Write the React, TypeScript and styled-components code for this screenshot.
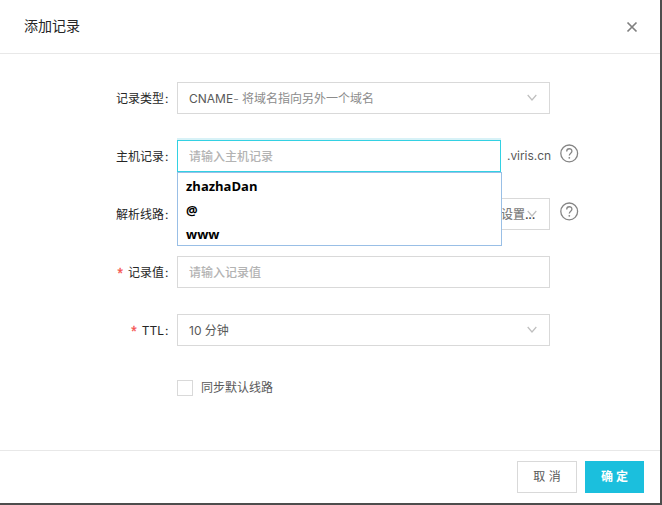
import React from "react";
import styled, { createGlobalStyle, css } from "styled-components";

const GlobalStyle = createGlobalStyle`
  * { box-sizing: border-box; }
  body {
    margin: 0;
    background: #4d4d4d;
    font: 12px/18px Inter, "Noto Sans CJK SC", sans-serif;
    color: #595959;
    overflow: hidden;
  }
`;

const Modal = styled.div`
  width: 660px;
  height: 503px;
  background: #fff;
  display: flex;
  flex-direction: column;
`;

const Header = styled.header`
  height: 54px;
  flex: none;
  display: flex;
  align-items: center;
  justify-content: space-between;
  padding: 0 22px 0 24px;
  border-bottom: 1px solid #e8e8e8;
`;

const Title = styled.h1`
  margin: 0;
  padding-bottom: 2px;
  font-size: 14px;
  line-height: 22px;
  font-weight: 400;
  color: #262626;
`;

const CloseButton = styled.button`
  display: flex;
  border: 0;
  padding: 0;
  background: none;
  color: #808080;
`;

const Form = styled.main`
  flex: 1;
  display: flex;
  flex-direction: column;
  gap: 26px;
  padding-top: 28px;
`;

const Row = styled.div`
  height: 32px;
  flex: none;
  display: flex;
  align-items: center;
`;

const Label = styled.label`
  width: 177px;
  padding: 1px 7px 0 0;
  display: flex;
  justify-content: flex-end;
  color: #262626;
  white-space: pre;
`;

const Colon = styled.span`
  margin-left: 1px;
  width: 5px;
`;

const Required = styled.span`
  color: #f5504e;
  margin-right: 5px;
  padding-top: 1px;
  height: 18px;
  font: 14px/20px "Liberation Mono", monospace;
  -webkit-text-stroke: 0.3px #f5504e;
  width: 7px;
`;

const Control = styled.div<{ $width?: number; $focused?: boolean }>`
  position: relative;
  width: ${(p) => p.$width ?? 373}px;
  height: 32px;
  display: flex;
  align-items: center;
  padding: 1px 11px 0;
  border: 1px solid #d9d9d9;
  background: #fff;
  white-space: pre;
  ${(p) =>
    p.$focused &&
    css`
      border-color: #33d1e3;
      box-shadow: 0 -2px 0 #d8f2f7;
    `}
`;

const TextInput = styled.input`
  width: 100%;
  padding: 0;
  border: 0;
  outline: 0;
  font: inherit;
  background: transparent;
  &::placeholder { color: #b3b3b3; font-weight: 500; opacity: 1; }
`;

const Muted = styled.span`
  color: #8c8c8c;
`;

const LineValue = styled.span`
  flex: 1;
  text-align: right;
  padding-right: 3px;
  color: #808080;
  font-weight: 500;
`;

const Ellipsis = styled.span`
  color: #404040;
  letter-spacing: -0.3px;
`;

const Arrow = styled.span`
  position: absolute;
  right: 12px;
  top: 10px;
  display: flex;
`;

const Suggestions = styled.ul`
  position: absolute;
  z-index: 2;
  top: 31px;
  left: -1px;
  width: 325px;
  height: 74px;
  margin: 0;
  padding: 1px 8px;
  list-style: none;
  background: #fff;
  border: 1px solid #99bfe6;
`;

const Suggestion = styled.li`
  height: 24px;
  font: 700 13px/24px "Open Sans", sans-serif;
  color: #000;
`;

const Suffix = styled.span`
  width: 49px;
  padding-left: 6px;
  letter-spacing: -0.05px;
  white-space: nowrap;
`;

const Help = styled.span`
  display: flex;
  margin: -5px 0 0 10px;
`;

const CheckRow = styled.label`
  display: flex;
  align-items: center;
  gap: 8px;
  padding-left: 177px;
  height: 32px;
`;

const Checkbox = styled.input`
  appearance: none;
  width: 16px;
  height: 16px;
  margin: 0;
  border: 1px solid #d9d9d9;
  background: #fff;
`;

const Footer = styled.footer`
  height: 53px;
  flex: none;
  display: flex;
  justify-content: flex-end;
  gap: 8px;
  padding: 10px 16px 0;
  border-top: 1px solid #e8e8e8;
`;

const Button = styled.button<{ $primary?: boolean }>`
  height: 32px;
  width: ${(p) => (p.$primary ? 59 : 60)}px;
  padding: 0;
  border: 1px solid ${(p) => (p.$primary ? "#1bbfdd" : "#d9d9d9")};
  background: ${(p) => (p.$primary ? "#1bbfdd" : "#fff")};
  color: ${(p) => (p.$primary ? "#fff" : "#595959")};
  font: ${(p) => (p.$primary ? 700 : 400)} 12px/18px Inter, "Noto Sans CJK SC", sans-serif;
`;

const Chevron = () => (
  <Arrow>
    <svg width="10" height="10" viewBox="0 0 10 10" fill="none" stroke="#bfbfbf" strokeWidth="1.2">
      <path d="M.7 2 5 7 9.3 2" />
    </svg>
  </Arrow>
);

const HelpIcon = () => (
  <Help>
    <svg width="19" height="19" viewBox="0 0 19 19" fill="none" stroke="#858585" strokeWidth="1.3">
      <circle cx="9.2" cy="9.4" r="8.4" />
      <path d="M6.7 7.4c0-3.5 5.2-3.5 5.2-.2 0 2-2.6 2-2.6 4.4" />
      <circle cx="9.3" cy="13.8" r=".9" fill="#858585" stroke="none" />
    </svg>
  </Help>
);

const FieldLabel = ({ text, required }: { text: string; required?: boolean }) => (
  <Label>
    {required && <Required>*</Required>}
    {text}
    <Colon>:</Colon>
  </Label>
);

const hosts = ["zhazhaDan", "@", "www"];

export default function App() {
  return (
    <>
      <GlobalStyle />
      <Modal role="dialog">
        <Header>
          <Title>添加记录</Title>
          <CloseButton aria-label="关闭">
            <svg width="12" height="12" viewBox="0 0 12 12" fill="none" stroke="currentColor" strokeWidth="1.7">
              <path d="m1.5 1.5 9 9m0-9-9 9" />
            </svg>
          </CloseButton>
        </Header>
        <Form>
          <Row>
            <FieldLabel text="记录类型" />
            <Control>
              CNAME<Muted>- 将域名指向另外一个域名</Muted>
              <Chevron />
            </Control>
          </Row>
          <Row>
            <FieldLabel text="主机记录" />
            <Control $width={324} $focused>
              <TextInput placeholder="请输入主机记录" />
              <Suggestions>
                {hosts.map((host) => (
                  <Suggestion key={host}>{host}</Suggestion>
                ))}
              </Suggestions>
            </Control>
            <Suffix>.viris.cn</Suffix>
            <HelpIcon />
          </Row>
          <Row>
            <FieldLabel text="解析线路" />
            <Control>
              <Chevron />
              <LineValue>
                设置<Ellipsis>...</Ellipsis>
              </LineValue>
            </Control>
            <HelpIcon />
          </Row>
          <Row>
            <FieldLabel text="记录值" required />
            <Control>
              <TextInput placeholder="请输入记录值" />
            </Control>
          </Row>
          <Row>
            <FieldLabel text="TTL" required />
            <Control>
              10 分钟
              <Chevron />
            </Control>
          </Row>
          <CheckRow>
            <Checkbox type="checkbox" />
            同步默认线路
          </CheckRow>
        </Form>
        <Footer>
          <Button>取 消</Button>
          <Button $primary>确 定</Button>
        </Footer>
      </Modal>
    </>
  );
}
